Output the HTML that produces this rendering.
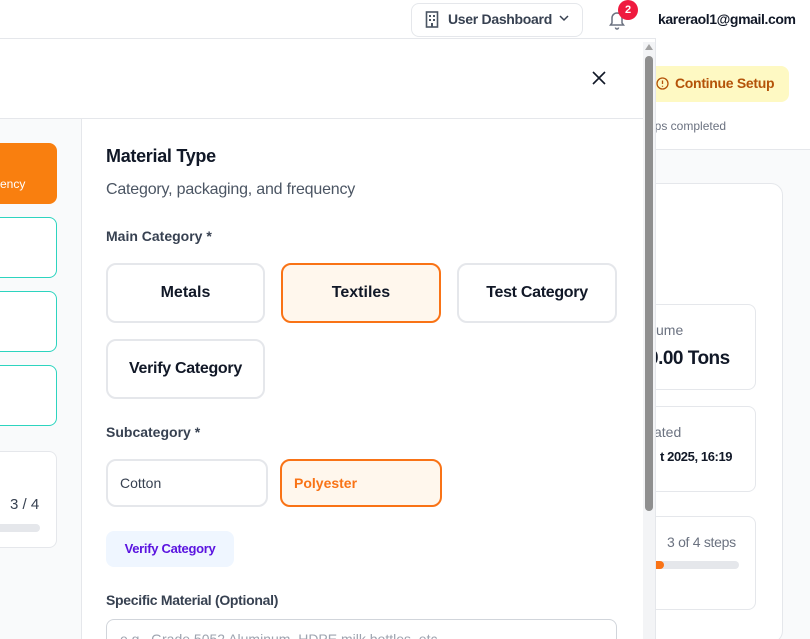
<!DOCTYPE html>
<html><head><style>
*{box-sizing:border-box;margin:0;padding:0}
html,body{width:810px;height:639px;overflow:hidden}
body{background:#f9fafb;font-family:"Liberation Sans",sans-serif;color:#111827;position:relative;white-space:nowrap}
.abs{position:absolute}
.top{left:0;top:0;width:810px;height:38px;background:#fff}
.btn{border:2px solid #e5e7eb;border-radius:10px;background:#fff;display:flex;align-items:center;justify-content:center;font-size:16px;font-weight:bold;color:#111827}
.sel{border-color:#f97316;background:#fff7ed}
.card{background:#fff;border:1px solid #e5e7eb;border-radius:8px}
</style></head><body>
<div class="abs top"></div>
<div class="abs" style="left:656px;top:38px;width:154px;height:12px;background:#fff"></div>
<div class="abs" style="left:411px;top:3px;width:172px;height:34px;border:1px solid #e5e7eb;border-radius:8px;background:#fff"></div>
<svg class="abs" style="left:425px;top:11px" width="14" height="17" viewBox="0 0 14 17"><rect x="1.5" y="1" width="11" height="15" fill="none" stroke="#4b5563" stroke-width="1.6"/><g fill="#4b5563"><rect x="4" y="4" width="2" height="2"/><rect x="8" y="4" width="2" height="2"/><rect x="4" y="8" width="2" height="2"/><rect x="8" y="8" width="2" height="2"/><rect x="6" y="12" width="2" height="4"/></g></svg>
<div class="abs" style="left:448px;top:11px;font-size:14px;font-weight:bold;color:#374151;letter-spacing:-0.3px">User Dashboard</div>
<svg class="abs" style="left:559px;top:15px" width="10" height="7"><path d="M1 1l4 4 4-4" stroke="#374151" stroke-width="1.5" fill="none"/></svg>
<svg class="abs" style="left:608px;top:10px" width="18" height="20" viewBox="0 0 18 20"><path d="M4 13V8a5 5 0 0110 0v5l1.5 2h-13z" fill="none" stroke="#6b7280" stroke-width="1.5"/><path d="M7.5 17.5a1.5 1.5 0 003 0" stroke="#6b7280" stroke-width="1.5" fill="none"/></svg>
<div class="abs" style="left:618px;top:0;width:20px;height:20px;border-radius:50%;background:#ef1a3f;color:#fff;font-size:11px;font-weight:bold;text-align:center;line-height:20px">2</div>
<div class="abs" style="left:658px;top:11px;font-size:14px;font-weight:bold;color:#111827;letter-spacing:-0.4px">kareraol1@gmail.com</div>
<div class="abs" style="left:656px;top:50px;width:160px;height:100px;background:#fff;border-bottom:1px solid #e5e7eb"></div>
<div class="abs" style="left:640px;top:66px;width:149px;height:36px;background:#fef9c3;border-radius:8px"></div>
<svg class="abs" style="left:656px;top:77px" width="13" height="13"><circle cx="6.5" cy="6.5" r="5.5" fill="none" stroke="#b45309" stroke-width="1.3"/><path d="M6.5 3.5v3.5M6.5 8.8v1" stroke="#b45309" stroke-width="1.3"/></svg>
<div class="abs" style="left:675px;top:75px;font-size:14px;font-weight:bold;color:#b45309;letter-spacing:-0.3px">Continue Setup</div>
<div class="abs" style="left:648px;top:119px;font-size:12px;color:#6b7280">eps completed</div>
<div class="abs" style="left:640px;top:183px;width:143px;height:460px;background:#fff;border:1px solid #e5e7eb;border-radius:12px"></div>
<div class="abs card" style="left:640px;top:304px;width:116px;height:86px"></div>
<div class="abs" style="left:656px;top:322px;font-size:14px;color:#6b7280">ume</div>
<div class="abs" style="left:648px;top:348px;font-size:19px;font-weight:bold;letter-spacing:-0.5px">0.00 Tons</div>
<div class="abs card" style="left:640px;top:406px;width:116px;height:86px"></div>
<div class="abs" style="left:654px;top:424px;font-size:14px;color:#6b7280">ated</div>
<div class="abs" style="left:660px;top:449px;font-size:13px;font-weight:bold;letter-spacing:-0.4px">t 2025, 16:19</div>
<div class="abs card" style="left:640px;top:516px;width:116px;height:94px"></div>
<div class="abs" style="left:667px;top:534px;font-size:14px;color:#6b7280;letter-spacing:-0.3px">3 of 4 steps</div>
<div class="abs" style="left:652px;top:561px;width:87px;height:8px;background:#e5e7eb;border-radius:4px"></div>
<div class="abs" style="left:652px;top:561px;width:12px;height:8px;background:#f97316;border-radius:4px"></div>

<div class="abs" style="left:0;top:38px;width:656px;height:601px;background:#fff;border-top:1px solid #e5e7eb;border-right:1px solid #e5e7eb"></div>
<div class="abs" style="left:0;top:118px;width:82px;height:521px;background:#f9fafb;border-right:1px solid #e5e7eb;border-top:1px solid #e5e7eb"></div>
<div class="abs" style="left:82px;top:118px;width:562px;height:1px;background:#e5e7eb"></div>
<svg class="abs" style="left:592px;top:71px" width="14" height="14"><path d="M1 1l12 12M13 1L1 13" stroke="#111827" stroke-width="1.6"/></svg>
<div class="abs" style="left:643px;top:42px;width:12px;height:597px;background:#f3f4f6"></div>
<div class="abs" style="left:645px;top:56px;width:8px;height:455px;background:#8f8f8f;border-radius:4px"></div>
<svg class="abs" style="left:645px;top:44px" width="8" height="6"><path d="M0 6L4 0 8 6z" fill="#a3a3a3"/></svg>

<div class="abs" style="left:-10px;top:143px;width:67px;height:61px;background:#f97f0f;border-radius:8px"></div>
<div class="abs" style="left:0;top:177px;font-size:12px;color:#fff">ency</div>
<div class="abs" style="left:-10px;top:217px;width:67px;height:61px;background:#fff;border:1px solid #2dd4bf;border-radius:8px"></div>
<div class="abs" style="left:-10px;top:291px;width:67px;height:61px;background:#fff;border:1px solid #2dd4bf;border-radius:8px"></div>
<div class="abs" style="left:-10px;top:365px;width:67px;height:61px;background:#fff;border:1px solid #2dd4bf;border-radius:8px"></div>
<div class="abs card" style="left:-10px;top:451px;width:67px;height:97px"></div>
<div class="abs" style="left:10px;top:496px;font-size:15px;color:#374151">3 / 4</div>
<div class="abs" style="left:-10px;top:524px;width:50px;height:8px;background:#e5e7eb;border-radius:4px"></div>

<div class="abs" style="left:106px;top:146px;font-size:18px;font-weight:bold;letter-spacing:-0.3px">Material Type</div>
<div class="abs" style="left:106px;top:181px;font-size:16px;color:#4b5563;letter-spacing:-0.2px">Category, packaging, and frequency</div>
<div class="abs" style="left:106px;top:228px;font-size:14px;font-weight:bold;color:#374151">Main Category *</div>
<div class="abs btn" style="left:106px;top:263px;width:159px;height:60px">Metals</div>
<div class="abs btn sel" style="left:281px;top:263px;width:160px;height:60px">Textiles</div>
<div class="abs btn" style="left:457px;top:263px;width:160px;height:60px;letter-spacing:-0.3px">Test Category</div>
<div class="abs btn" style="left:106px;top:339px;width:159px;height:60px;letter-spacing:-0.3px">Verify Category</div>
<div class="abs" style="left:106px;top:424px;font-size:14px;font-weight:bold;color:#374151">Subcategory *</div>
<div class="abs btn" style="left:106px;top:459px;width:162px;height:48px;justify-content:flex-start;padding-left:12px;font-size:14px;font-weight:normal;color:#374151">Cotton</div>
<div class="abs btn sel" style="left:280px;top:459px;width:162px;height:48px;justify-content:flex-start;padding-left:12px;font-size:14px;color:#f97316;font-weight:bold">Polyester</div>
<div class="abs" style="left:106px;top:531px;width:128px;height:36px;background:#eff6ff;border-radius:8px;color:#5b14e0;font-size:13px;font-weight:bold;text-align:center;line-height:36px;letter-spacing:-0.3px">Verify Category</div>
<div class="abs" style="left:106px;top:592px;font-size:14px;font-weight:bold;color:#374151;letter-spacing:-0.3px">Specific Material (Optional)</div>
<div class="abs" style="left:106px;top:619px;width:511px;height:40px;border:1px solid #d1d5db;border-radius:8px"></div>
<div class="abs" style="left:120px;top:631px;font-size:14px;color:#9ca3af">e.g., Grade 5052 Aluminum, HDPE milk bottles, etc.</div>
</body></html>
